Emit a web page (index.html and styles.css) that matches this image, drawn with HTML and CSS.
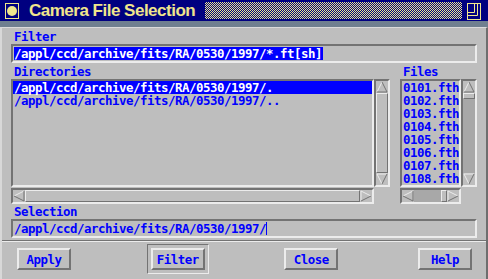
FILE: index.html
```html
<!DOCTYPE html>
<html lang="en">
<head>
    <meta charset="UTF-8">
    <title>Camera File Selection</title>
    <link rel="stylesheet" href="styles.css">
</head>
<body>
    <div class="window">
        <div class="titlebar">
            <svg class="tb-icon" width="14" height="16" viewBox="0 0 14 16">
                <rect x="0.5" y="0.5" width="13" height="15" fill="none" stroke="#f0e68c"/>
                <circle cx="7" cy="8" r="5" fill="#f0e68c"/>
            </svg>
            <span class="title">Camera File Selection</span>
            <span class="dither"></span>
            <svg class="tb-max" width="14" height="17" viewBox="0 0 14 17">
                <rect x="0.5" y="0.5" width="13" height="16" fill="none" stroke="#f0e68c"/>
                <path d="M7.5 0.5 V9.5 H0.5 M10.5 0.5 V12.5 H0.5" fill="none" stroke="#f0e68c"/>
            </svg>
        </div>
        <div class="band"></div>
        <div class="dialog">
            <div class="content">
                <div class="label">Filter</div>
                <div class="field"><span class="sel">/appl/ccd/archive/fits/RA/0530/1997/*.ft[sh]</span><span class="caret"></span></div>

                <div class="lists">
                    <div class="dircol">
                        <div class="label">Directories</div>
                        <div class="listrow">
                            <div class="list dirlist">
                                <div class="row hl">/appl/ccd/archive/fits/RA/0530/1997/.</div>
                                <div class="row">/appl/ccd/archive/fits/RA/0530/1997/..</div>
                            </div>
                            <div class="vscroll">
                                <svg class="arrow" viewBox="0 0 12 12"><polygon points="6,1 1,11 11,11" fill="#bebebe"/><path d="M1 11 L6 1" stroke="#ececec"/><path d="M6 1 L11 11 H1" fill="none" stroke="#737373"/></svg>
                                <div class="slider"></div>
                                <svg class="arrow" viewBox="0 0 12 12"><polygon points="1,1 11,1 6,11" fill="#bebebe"/><path d="M1 1 H11 M1 1 L6 11" fill="none" stroke="#ececec"/><path d="M11 1 L6 11" stroke="#737373"/></svg>
                            </div>
                        </div>
                        <div class="hscroll dirh">
                            <svg class="harrow" viewBox="0 0 12 12"><polygon points="1,6 11,1 11,11" fill="#bebebe"/><path d="M1 6 L11 1" stroke="#ececec"/><path d="M1 6 L11 11 V1" fill="none" stroke="#737373"/></svg>
                            <div class="slider"></div>
                            <svg class="harrow" viewBox="0 0 12 12"><polygon points="1,1 11,6 1,11" fill="#bebebe"/><path d="M1 11 V1 L11 6" fill="none" stroke="#ececec"/><path d="M11 6 L1 11" stroke="#737373"/></svg>
                        </div>
                    </div>

                    <div class="filecol">
                        <div class="label files-label">Files</div>
                        <div class="listrow">
                            <div class="list filelist">
                                <div class="row">0101.fth</div>
                                <div class="row">0102.fth</div>
                                <div class="row">0103.fth</div>
                                <div class="row">0104.fth</div>
                                <div class="row">0105.fth</div>
                                <div class="row">0106.fth</div>
                                <div class="row">0107.fth</div>
                                <div class="row">0108.fth</div>
                            </div>
                            <div class="vscroll">
                                <svg class="arrow" viewBox="0 0 12 12"><polygon points="6,1 1,11 11,11" fill="#bebebe"/><path d="M1 11 L6 1" stroke="#ececec"/><path d="M6 1 L11 11 H1" fill="none" stroke="#737373"/></svg>
                                <div class="slider small"></div>
                                <div class="trough"></div>
                                <svg class="arrow" viewBox="0 0 12 12"><polygon points="1,1 11,1 6,11" fill="#bebebe"/><path d="M1 1 H11 M1 1 L6 11" fill="none" stroke="#ececec"/><path d="M11 1 L6 11" stroke="#737373"/></svg>
                            </div>
                        </div>
                        <div class="hscroll fileh">
                            <svg class="harrow" viewBox="0 0 12 12"><polygon points="1,6 11,1 11,11" fill="#bebebe"/><path d="M1 6 L11 1" stroke="#ececec"/><path d="M1 6 L11 11 V1" fill="none" stroke="#737373"/></svg>
                            <div class="trough"></div>
                            <div class="slider small"></div>
                            <svg class="harrow" viewBox="0 0 12 12"><polygon points="1,1 11,6 1,11" fill="#bebebe"/><path d="M1 11 V1 L11 6" fill="none" stroke="#ececec"/><path d="M11 6 L1 11" stroke="#737373"/></svg>
                        </div>
                    </div>
                </div>

                <div class="label sel-label">Selection</div>
                <div class="field">/appl/ccd/archive/fits/RA/0530/1997/<span class="caret"></span></div>
            </div>

            <div class="sep"></div>

            <div class="buttons">
                <button class="btn">Apply</button>
                <div class="default"><button class="btn">Filter</button></div>
                <button class="btn">Close</button>
                <button class="btn">Help</button>
            </div>
        </div>
    </div>
</body>
</html>
```

FILE: styles.css
```css
* {
    box-sizing: border-box;
}
body {
    margin: 0;
    width: 488px;
    height: 279px;
    overflow: hidden;
    background-color: #bebebe;
    color: #0000ff;
    font-family: "DejaVu Sans Mono", "Liberation Mono", monospace;
    font-weight: bold;
    font-size: 12.4px;
    letter-spacing: -0.46px;
}
.window {
    width: 488px;
    height: 279px;
    display: flex;
    flex-direction: column;
}
.titlebar {
    height: 21px;
    flex: none;
    background-color: #000080;
    display: flex;
    align-items: flex-start;
    padding: 0 7px 0 5px;
    color: #f0e68c;
}
.tb-icon {
    margin-top: 3px;
    flex: none;
}
.title {
    width: 176px;
    flex: none;
    overflow: hidden;
    font-family: "Liberation Sans", Arial, sans-serif;
    font-weight: bold;
    font-size: 17px;
    letter-spacing: -0.5px;
    line-height: 21px;
    margin-left: 10px;
    white-space: nowrap;
}
.dither {
    flex: 1;
    height: 17px;
    margin: 2px 5px 0 0;
    background: repeating-conic-gradient(#f0e68c 0 25%, #000080 0 50%) 0 0 / 2px 2px;
}
.tb-max {
    margin-top: 3px;
    flex: none;
}
.band {
    height: 6px;
    flex: none;
    background-color: #708090;
}
.dialog {
    flex: 1;
    border-top: 1px solid #dcdcdc;
    border-left: 2px solid #d8d8d8;
    border-right: 2px solid #6e6e6e;
}
.content {
    padding: 1px 9px 0 9px;
}
.label {
    height: 15px;
    line-height: 15px;
    padding-left: 3px;
}
.field {
    height: 19px;
    border: 2px solid;
    border-color: #737373 #ececec #ececec #737373;
    padding: 1px 1px 0 1px;
    line-height: 13px;
    white-space: nowrap;
    display: flex;
    align-items: flex-start;
}
.sel {
    background-color: #0000ff;
    color: #ffffff;
}
.caret {
    width: 1px;
    height: 13px;
    background-color: #0000ff;
}
.lists {
    display: flex;
    margin-top: 1px;
}
.dircol {
    width: 379px;
}
.filecol {
    width: 77px;
    margin-left: 10px;
}
.listrow {
    height: 108px;
    display: flex;
}
.list {
    flex: 1;
    border: 2px solid;
    border-color: #737373 #ececec #ececec #737373;
    padding: 0;
    overflow: hidden;
    white-space: nowrap;
    line-height: 13px;
}
.row {
    height: 13px;
    padding-left: 1px;
}
.row.hl {
    background-color: #0000ff;
    color: #ffffff;
}
.vscroll {
    width: 16px;
    flex: none;
    display: flex;
    flex-direction: column;
    border: 2px solid;
    border-color: #737373 #ececec #ececec #737373;
    background-color: #a8a8a8;
}
.arrow {
    width: 12px;
    height: 12px;
    flex: none;
    background-color: #bebebe;
}
.slider {
    flex: 1;
    border: 1px solid;
    border-color: #ececec #737373 #737373 #ececec;
    background-color: #bebebe;
}
.vscroll .slider.small {
    flex: none;
    height: 6px;
}
.hscroll .slider.small {
    flex: none;
    width: 6px;
}
.trough {
    flex: 1;
}
.hscroll {
    height: 16px;
    margin-top: 1px;
    display: flex;
    border: 2px solid;
    border-color: #737373 #ececec #ececec #737373;
    background-color: #a8a8a8;
}
.dirh {
    width: 363px;
}
.fileh {
    width: 61px;
}
.harrow {
    width: 12px;
    height: 12px;
    flex: none;
    background-color: #bebebe;
}
.sel-label {
    margin-top: 0;
}
.sep {
    height: 2px;
    margin-top: 2px;
    border-top: 1px solid #737373;
    border-bottom: 1px solid #ececec;
}
.buttons {
    display: flex;
    justify-content: space-between;
    align-items: flex-start;
    padding: 6px 14px 0 15px;
}
.btn {
    width: 54px;
    height: 22px;
    padding: 0;
    border: 2px solid;
    border-color: #ececec #737373 #737373 #ececec;
    background-color: #bebebe;
    color: #0000ff;
    font: inherit;
    letter-spacing: inherit;
}
.default {
    margin: -4px;
    padding: 3px;
    border: 1px solid;
    border-color: #737373 #ececec #ececec #737373;
}
.default .btn {
    display: block;
}
```
